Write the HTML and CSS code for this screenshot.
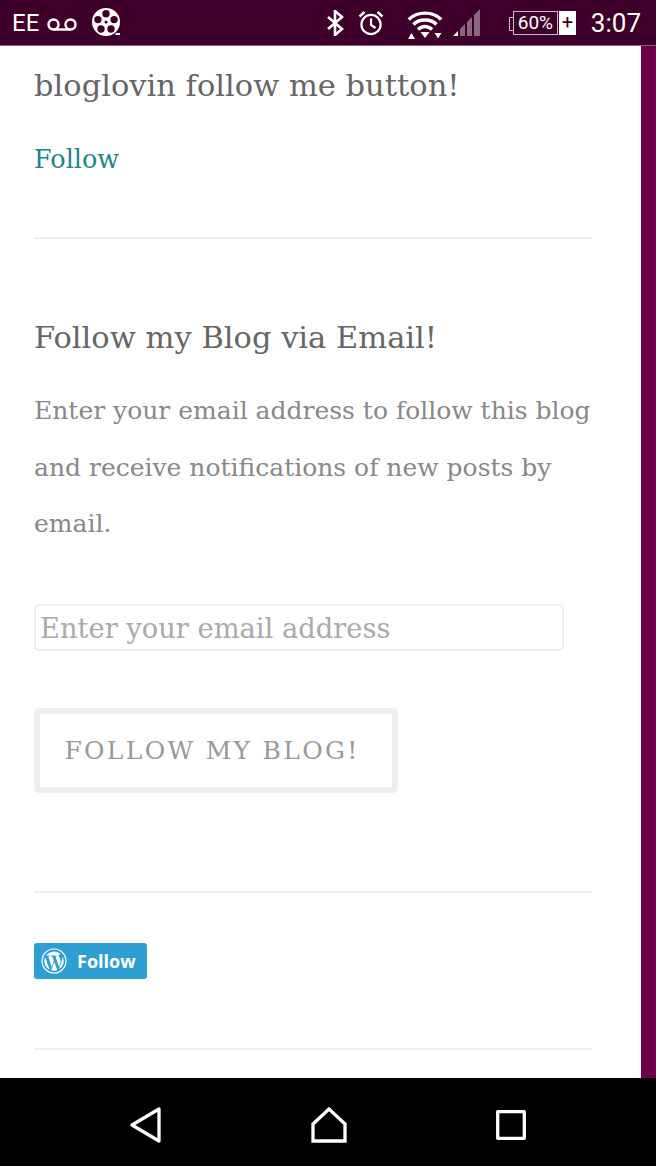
FILE: index.html
```html
<!DOCTYPE html>
<html lang="en">
<head>
  <meta charset="UTF-8" />
  <title>Follow my Blog</title>
  <link rel="stylesheet" href="styles.css">
</head>
<body>
  <div class="status-bar">
    <div class="status-left">
      <span class="carrier">EE</span>
      <svg class="ic-voicemail" viewBox="0 0 30 13" fill="none" stroke="#fff" stroke-width="2.400">
        <circle cx="6.500" cy="6.500" r="5" />
        <circle cx="23.500" cy="6.500" r="5" />
        <line x1="6.500" y1="11.500" x2="23.500" y2="11.500" />
      </svg>
      <svg class="ic-reel" viewBox="0 0 29 29">
        <path fill="#fff" fill-rule="evenodd" d="M14 0a14 14 0 1 0 0 28a14 14 0 1 0 0-28z
          M14 2a3.700 3.700 0 1 1 0 7.400a3.700 3.700 0 1 1 0-7.400z
          M22.100 7.900a3.700 3.700 0 1 1 0 7.400a3.700 3.700 0 1 1 0-7.400z
          M19 17.300a3.700 3.700 0 1 1 0 7.400a3.700 3.700 0 1 1 0-7.400z
          M9 17.300a3.700 3.700 0 1 1 0 7.400a3.700 3.700 0 1 1 0-7.400z
          M5.900 7.900a3.700 3.700 0 1 1 0 7.400a3.700 3.700 0 1 1 0-7.400z
          M14 12.500a1.500 1.500 0 1 0 0 3a1.500 1.500 0 1 0 0-3z" />
        <path fill="#fff" d="M24 25h4v2h-5z" />
      </svg>
    </div>
    <div class="status-right">
      <svg class="ic-bt" viewBox="0 0 18 26" fill="none" stroke="#fff" stroke-width="2.600">
        <path d="M2 7l14 12l-7 6V1l7 6L2 19" />
      </svg>
      <svg class="ic-alarm" viewBox="0 0 26 26" fill="none" stroke="#fff" stroke-width="2.200">
        <circle cx="13" cy="14.500" r="9.600" />
        <path d="M13 8.500v6.500l4.500 3" />
        <path d="M1.500 6.500l5-4.500M24.500 6.500l-5-4.500" stroke-width="2.400" />
      </svg>
      <svg class="ic-wifi" viewBox="0 0 36 30" fill="none" stroke="#fff" stroke-width="3.400">
        <path d="M1.800 9.500C10 1 26 1 34.200 9.500" />
        <path d="M6.500 14.500C12 8.500 24 8.500 29.500 14.500" />
        <path d="M11 19.500C15 15.500 21 15.500 25 19.500" />
        <path fill="#fff" stroke="none" d="M13.500 22h9l-4.500 6zM1 29l3.500-6L8 29zM27.500 23h7l-3.500 5.500z" />
      </svg>
      <svg class="ic-signal" viewBox="0 0 28 28">
        <path fill="#fff" d="M0 27l5-5v5z" />
        <path fill="#fff" opacity="0.4" d="M7 20l5-5v12H7zM14 13l5-5v19h-5zM21 6l6-6v27h-6z" />
      </svg>
      <div class="battery">
        <span class="battery-level">60%</span>
        <span class="battery-plus">+</span>
      </div>
      <span class="clock">3:07</span>
    </div>
  </div>

  <div class="page">
    <main class="content">
      <section class="widget widget-first">
        <h2>bloglovin follow me button!</h2>
        <p><a href="#">Follow</a></p>
      </section>

      <section class="widget widget-email">
        <h2>Follow my Blog via Email!</h2>
        <p>Enter your email address to follow this blog and receive notifications of new posts by email.</p>
        <input class="email-input" type="text" placeholder="Enter your email address" />
        <button class="follow-btn">FOLLOW MY BLOG!</button>
      </section>

      <section class="widget widget-wp">
        <a class="wp-btn" href="#">
          <svg viewBox="0 0 26 26">
            <circle cx="13" cy="13" r="12" fill="none" stroke="#fff" stroke-width="1.200" />
            <path fill="#fff" d="M3.300 13c0 3.800 2.200 7.100 5.400 8.700L4.100 9.100A9.700 9.700 0 0 0 3.300 13zM19.500 12.500c0-1.200-.4-2-.8-2.600-.5-.8-.9-1.400-.9-2.200 0-.8.600-1.600 1.500-1.600h.1A9.700 9.700 0 0 0 5 7.700h.6c1 0 2.600-.1 2.600-.1.500 0 .6.700.1.800 0 0-.5.100-1.100.1l3.500 10.500 2.100-6.300-1.500-4.200c-.5 0-1-.1-1-.1-.5 0-.5-.8 0-.8 0 0 1.600.1 2.600.1s2.600-.1 2.600-.1c.5 0 .6.700.1.800 0 0-.5.100-1.100.1l3.500 10.400 1-3.200c.4-1.300.7-2.200.7-3zM13.200 13.800l-2.900 8.500a9.700 9.700 0 0 0 6-.2l-.1-.1zM21.500 8.300c0 .3.100.7.100 1 0 1-.2 2.100-.7 3.500l-3 8.500a9.700 9.700 0 0 0 3.600-13z" />
          </svg>
          <span>Follow</span>
        </a>
      </section>
    </main>
    <div class="side-strip"></div>
  </div>

  <div class="nav-bar">
    <svg class="ic-back" viewBox="0 0 32 36" fill="none" stroke="#fff" stroke-width="3.300" stroke-linejoin="round">
      <path d="M3 18L30 2v32z" />
    </svg>
    <svg class="ic-home" viewBox="0 0 36 36" fill="none" stroke="#fff" stroke-width="3.300">
      <path d="M2 34V17L18 2l16 15v17z" />
    </svg>
    <svg class="ic-recent" viewBox="0 0 30 30" fill="none" stroke="#fff" stroke-width="3.300" stroke-linejoin="round">
      <rect x="1.700" y="1.700" width="26.600" height="26.600" />
    </svg>
  </div>
</body>
</html>
```

FILE: styles.css
```css
html, body {
  margin: 0;
  padding: 0;
  height: 100%;
}
body {
  width: 656px;
  height: 1166px;
  display: flex;
  flex-direction: column;
  overflow: hidden;
  background: #fff;
  font-family: "DejaVu Serif", "Liberation Serif", serif;
}

/* status bar */
.status-bar {
  height: 46px;
  flex: none;
  box-sizing: border-box;
  border-bottom: 1px solid #8a5f7c;
  background: #3e002a;
  color: #fff;
  display: flex;
  justify-content: space-between;
  align-items: center;
  font-family: "Roboto", sans-serif;
}
.status-left,
.status-right {
  display: flex;
  align-items: center;
}
.status-left {
  padding-left: 12px;
}
.status-right {
  padding-right: 15px;
}
.carrier {
  font-size: 24px;
  width: 35px;
}
.ic-voicemail {
  width: 30px;
  height: 13px;
  margin-top: 3px;
  margin-right: 15px;
}
.ic-reel {
  width: 29px;
  height: 29px;
}
.ic-bt {
  width: 18px;
  height: 26px;
  margin-right: 14px;
}
.ic-alarm {
  width: 26px;
  height: 26px;
  margin-right: 23px;
}
.ic-wifi {
  width: 36px;
  height: 30px;
  margin-top: 4px;
  margin-right: 10px;
}
.ic-signal {
  width: 28px;
  height: 28px;
  margin-right: 32px;
}
.battery {
  display: flex;
  align-items: center;
  height: 24px;
  margin-right: 15px;
}
.battery-level {
  position: relative;
  box-sizing: border-box;
  width: 45px;
  height: 24px;
  margin-right: 1px;
  border: 1px solid #cdb8c6;
  font-size: 19px;
  line-height: 22px;
  text-align: center;
}
.battery-level::before {
  content: "";
  position: absolute;
  left: -5px;
  top: 5px;
  width: 4px;
  height: 12px;
  border: 1px solid #cdb8c6;
  border-right: none;
}
.battery-plus {
  width: 17px;
  height: 24px;
  background: #fff;
  color: #3e002a;
  font-size: 20px;
  line-height: 23px;
  text-align: center;
}
.clock {
  font-size: 26px;
}

/* page */
.page {
  flex: 1;
  display: flex;
  min-height: 0;
}
.content {
  flex: 1;
  padding: 0 49px 0 34px;
  overflow: hidden;
}
.side-strip {
  width: 15px;
  flex: none;
  background: #6b0047;
}
.widget {
  border-bottom: 2px solid #eeeeee;
}
.widget h2 {
  margin: 0;
  color: #666;
  font-size: 30.500px;
  line-height: 40px;
  font-weight: 400;
}
.widget p {
  margin: 0;
  color: #888;
  font-size: 25px;
  font-weight: 300;
  line-height: 56.500px;
}
.widget a {
  color: #21848a;
  text-decoration: none;
}
.widget-first {
  padding-top: 20px;
  height: 171px;
}
.widget-first p {
  margin-top: 35px;
  font-size: 25.500px;
  line-height: 36px;
}
.widget-email {
  padding-top: 79px;
  height: 573px;
}
.widget-email p {
  margin-top: 25px;
}
.email-input {
  display: block;
  box-sizing: border-box;
  width: 530px;
  height: 47px;
  margin-top: 51px;
  padding: 2px 4px 0;
  border: 2px solid #eeeeee;
  border-radius: 5px;
  font-family: inherit;
  font-size: 27.300px;
  outline: none;
}
.email-input::placeholder {
  color: #aaa;
}
.follow-btn {
  display: block;
  box-sizing: border-box;
  width: 364px;
  height: 85px;
  margin-top: 57px;
  padding: 0 8px 0 0;
  border: 6px solid #eeeeee;
  border-radius: 5px;
  background: #fff;
  color: #999;
  font-family: inherit;
  font-size: 25px;
  letter-spacing: 2.300px;
}
.widget-wp {
  padding-top: 50px;
  height: 105px;
}
.wp-btn {
  width: 113px;
  height: 36px;
  display: flex;
  align-items: center;
  gap: 10px;
  padding-left: 7px;
  box-sizing: border-box;
  background: #2e9fd0;
  border-radius: 3px;
}
.widget .wp-btn {
  color: #fff;
}
.wp-btn svg {
  width: 26px;
  height: 26px;
}
.wp-btn span {
  font-family: "Open Sans", sans-serif;
  font-weight: 700;
  font-size: 18px;
}

/* navigation */
.nav-bar {
  height: 88px;
  flex: none;
  box-sizing: border-box;
  background: #000;
  display: flex;
  align-items: center;
  justify-content: space-between;
  padding: 6px 130px 0 129px;
}
.ic-back {
  width: 32px;
  height: 36px;
}
.ic-home {
  width: 36px;
  height: 36px;
}
.ic-recent {
  width: 30px;
  height: 30px;
}
```
